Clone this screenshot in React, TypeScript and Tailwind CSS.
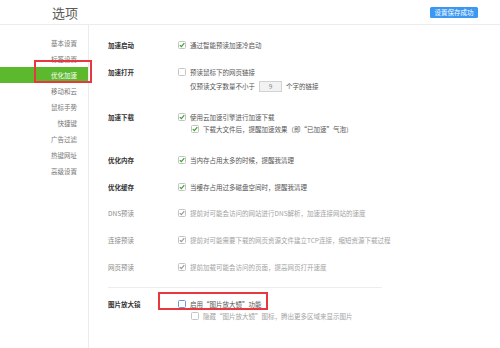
import React from "react";

const font = { fontFamily: '"Noto Sans CJK SC", "Noto Sans", sans-serif' };

const menu = ["基本设置", "标签设置", "优化加速", "移动和云", "鼠标手势", "快捷键", "广告过滤", "热键网址", "高级设置"];

type BoxProps = { checked?: boolean; muted?: boolean; blue?: boolean };

const Box = ({ checked, muted, blue }: BoxProps) => (
  <span
    className={`flex h-[8px] w-[8px] shrink-0 items-center justify-center rounded-[1.5px] border bg-white ${
      blue ? "border-[#6f93e0]" : "border-[#c4c4c4]"
    }`}
  >
    {checked && (
      <svg width="6" height="6" viewBox="0 0 6 6">
        <path d="M0.8 3.1 L2.4 4.6 L5.3 1.2" fill="none" stroke={muted ? "#9a9a9a" : "#3aa329"} strokeWidth="1.2" />
      </svg>
    )}
  </span>
);

type OptProps = BoxProps & { text: React.ReactNode; sub?: boolean; className?: string };

const Opt = ({ text, sub, className = "", ...box }: OptProps) => (
  <div className={`flex h-[12px] items-center gap-[4px] ${sub ? "pl-[13px]" : ""} ${className}`}>
    <Box {...box} />
    <span className={box.muted ? "text-[#a3a3a3]" : "text-[#555]"}>{text}</span>
  </div>
);

const Row = ({ label, muted, className = "", children }: { label: string; muted?: boolean; className?: string; children: React.ReactNode }) => (
  <div className={`flex ${className}`}>
    <div className={`flex h-[12px] w-[70px] shrink-0 items-center ${muted ? "text-[#8a8a8a]" : "font-bold text-[#333]"}`}>{label}</div>
    <div className="flex flex-col">{children}</div>
  </div>
);

export default function App() {
  return (
    <div className="relative h-[348px] w-[500px] overflow-hidden bg-white text-[6.5px] leading-none" style={font}>
      <div className="flex h-[25px] items-center justify-between border-b border-[#ececec] pl-[52px] pr-[22px]">
        <span className="text-[13px] text-[#5a5a5a]">选项</span>
        <span className="flex h-[11px] w-[48px] items-center justify-center rounded-[1.5px] bg-[#3c97f2] text-white">设置保存成功</span>
      </div>
      <div className="flex h-[323px]">
        <div className="w-[89px] shrink-0 border-r border-[#ececec] pt-[10px]">
          {menu.map((m) => (
            <div
              key={m}
              className={`flex h-[16px] items-center justify-end pr-[11px] ${
                m === "优化加速" ? "bg-[#5cb82c] text-white" : "text-[#777]"
              }`}
            >
              {m}
            </div>
          ))}
        </div>
        <div className="flex-1 pl-[19px] pt-[14px]">
          <Row label="加速启动">
            <Opt checked text="通过智能预读加速冷启动" />
          </Row>
          <Row label="加速打开" className="mt-[15px]">
            <Opt text="预读鼠标下的网页链接" />
            <div className="mt-[2px] flex h-[12px] items-center pl-[12px] text-[#555]">
              <span>仅预读文字数量不小于</span>
              <span className="mx-[4px] flex h-[11px] w-[23px] items-center justify-center border border-[#d2d2d2] bg-[#f2f2f2] text-[#888]">9</span>
              <span>个字的链接</span>
            </div>
          </Row>
          <Row label="加速下载" className="mt-[19px]">
            <Opt checked text="使用云加速引擎进行加速下载" />
            <Opt checked sub text="下载大文件后，提醒加速效果（即“已加速”气泡）" />
          </Row>
          <Row label="优化内存" className="mt-[19px]">
            <Opt checked text="当内存占用太多的时候，提醒我清理" />
          </Row>
          <Row label="优化缓存" className="mt-[15px]">
            <Opt checked text="当缓存占用过多磁盘空间时，提醒我清理" />
          </Row>
          <Row label="DNS预读" muted className="mt-[14px]">
            <Opt checked muted text="提前对可能会访问的网站进行DNS解析，加速连接网站的速度" />
          </Row>
          <Row label="连接预读" muted className="mt-[15px]">
            <Opt checked muted text="提前对可能需要下载的网页资源文件建立TCP连接，缩短资源下载过程" />
          </Row>
          <Row label="网页预读" muted className="mt-[15px]">
            <Opt checked muted text="提前加载可能会访问的页面，提高网页打开速度" />
          </Row>
          <div className="mt-[14px] w-[274px] border-t border-[#ededed]" />
          <Row label="图片放大镜" className="mt-[10px]">
            <Opt blue text="启用“图片放大镜”功能" />
            <Opt sub muted text="隐藏“图片放大镜”图标，腾出更多区域来显示图片" />
          </Row>
        </div>
      </div>
      <div className="pointer-events-none absolute left-[34px] top-[60px] h-[23px] w-[58px] border-2 border-[#e8383d]" />
      <div className="pointer-events-none absolute left-[158px] top-[292px] h-[18px] w-[110px] border-2 border-[#e8383d]" />
    </div>
  );
}
